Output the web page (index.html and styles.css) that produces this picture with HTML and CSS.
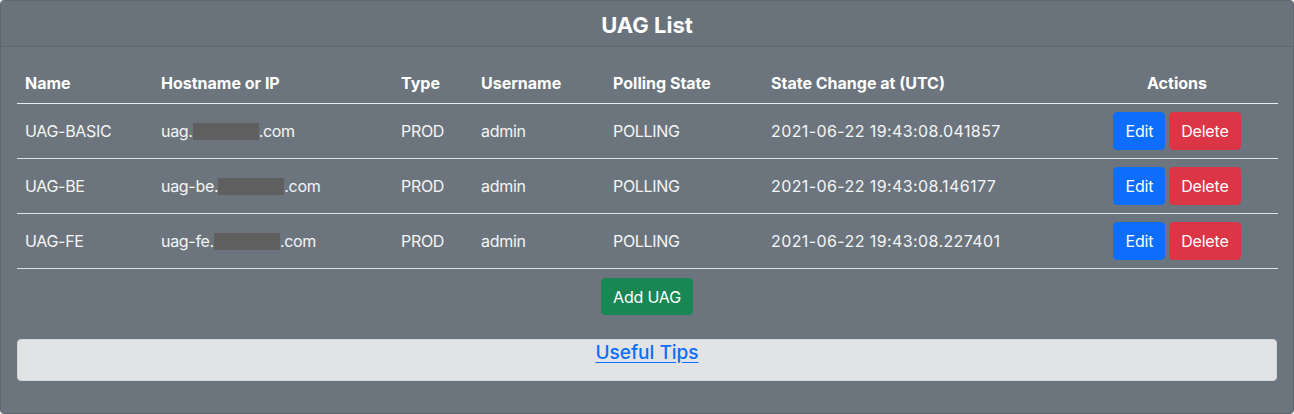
FILE: index.html
```html
<!DOCTYPE html>
<html>
<head>
<meta charset="utf-8">
<link rel="stylesheet" href="styles.css">
</head>
<body>
<div class="card">
  <div class="card-header">UAG List</div>
  <div class="card-body">
    <table class="uag-table">
      <colgroup>
        <col class="c-name"><col class="c-host"><col class="c-type"><col class="c-user"><col class="c-poll"><col class="c-time"><col class="c-act">
      </colgroup>
      <thead>
        <tr>
          <th>Name</th><th>Hostname or IP</th><th>Type</th><th>Username</th><th>Polling State</th><th>State Change at (UTC)</th><th class="center">Actions</th>
        </tr>
      </thead>
      <tbody>
        <tr>
          <td>UAG-BASIC</td>
          <td>uag.<span class="redact"></span>.com</td>
          <td>PROD</td><td>admin</td><td>POLLING</td><td class="time">2021-06-22 19:43:08.041857</td>
          <td><div class="actions"><button class="btn btn-primary">Edit</button><button class="btn btn-danger">Delete</button></div></td>
        </tr>
        <tr>
          <td>UAG-BE</td>
          <td>uag-be.<span class="redact"></span>.com</td>
          <td>PROD</td><td>admin</td><td>POLLING</td><td class="time">2021-06-22 19:43:08.146177</td>
          <td><div class="actions"><button class="btn btn-primary">Edit</button><button class="btn btn-danger">Delete</button></div></td>
        </tr>
        <tr>
          <td>UAG-FE</td>
          <td>uag-fe.<span class="redact"></span>.com</td>
          <td>PROD</td><td>admin</td><td>POLLING</td><td class="time">2021-06-22 19:43:08.227401</td>
          <td><div class="actions"><button class="btn btn-primary">Edit</button><button class="btn btn-danger">Delete</button></div></td>
        </tr>
      </tbody>
    </table>
    <div class="add-row"><button class="btn btn-success">Add UAG</button></div>
    <div class="tips"><a href="#">Useful Tips</a></div>
  </div>
</div>
</body>
</html>
```

FILE: styles.css
```css
* { box-sizing: border-box; }
html, body { margin: 0; padding: 0; background: #ffffff; }
body {
  font-family: Inter, "Noto Sans", sans-serif;
  font-size: 16px;
  line-height: 24px;
  color: #fff;
}
.card {
  background: #6c757d;
  border: 1px solid #5f666d;
  border-radius: 4px;
  width: 1294px;
}
.card-header {
  background: #6a737b;
  border-bottom: 1px solid #5f666d;
  text-align: center;
  font-size: 22px;
  font-weight: 700;
  line-height: 28px;
  padding: 10px 16px 7px;
  height: 46px;
}
.card-body { padding: 16px; }
.uag-table {
  width: 100%;
  border-collapse: collapse;
  table-layout: fixed;
  color: #fff;
}
.c-name { width: 136px; }
.c-host { width: 240px; }
.c-type { width: 80px; }
.c-user { width: 132px; }
.c-poll { width: 158px; }
.c-time { width: 313px; }
.c-act { width: 202px; }
.uag-table th {
  text-align: left;
  font-weight: 700;
  padding: 8px;
  border-bottom: 1px solid #e9ecef;
}
.uag-table td {
  padding: 8px;
  border-bottom: 1px solid #dee2e6;
  font-weight: 400;
  color: #f4f5f6;
  white-space: nowrap;
  letter-spacing: -0.3px;
}
.uag-table td.time {
  letter-spacing: 0.4px;
}
.uag-table th.center { text-align: center; }
.redact {
  display: inline-block;
  width: 66px;
  height: 17px;
  background: #5f5f60;
  vertical-align: -3px;
}
.actions {
  display: flex;
  justify-content: center;
  gap: 4px;
}
.btn {
  font-family: inherit;
  font-size: 16px;
  line-height: 24px;
  padding: 6px 11px;
  border: 1px solid transparent;
  border-radius: 4px;
  color: #fff;
  cursor: pointer;
  letter-spacing: -0.2px;
}
.btn-primary { background: #0d6efd; border-color: #0d6efd; }
.btn-danger { background: #dc3545; border-color: #dc3545; }
.btn-success { background: #198754; border-color: #198754; height: 37px; padding-top: 5px; padding-bottom: 5px; }
.add-row {
  display: flex;
  justify-content: center;
  margin-top: 9px;
}
.tips {
  margin-top: 24px;
  margin-bottom: 16px;
  background: #e2e3e5;
  border: 1px solid #d3d6d8;
  border-radius: 4px;
  height: 42px;
  display: flex;
  align-items: flex-start;
  justify-content: center;
  padding-top: 1px;
}
.tips a {
  color: #0d6efd;
  font-size: 19px;
  font-weight: 500;
  text-decoration: underline;
  text-underline-offset: 3px;
  line-height: 24px;
}
```
